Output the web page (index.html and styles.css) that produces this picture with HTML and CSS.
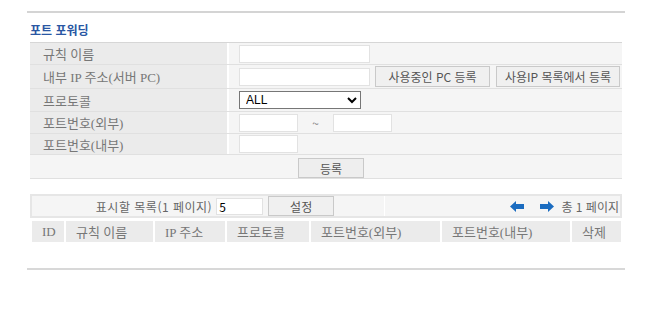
FILE: index.html
```html
<!DOCTYPE html>
<html lang="ko">
<head>
  <meta charset="UTF-8" />
  <title>포트 포워딩</title>
  <link rel="stylesheet" href="styles.css">
</head>
<body>
  <div class="page">
    <h2 class="title">포트 포워딩</h2>

    <div class="form">
      <div class="row r1">
        <div class="label">규칙 이름</div>
        <div class="value"><input type="text" class="field wide" /></div>
      </div>
      <div class="row r2">
        <div class="label">내부 IP 주소(서버 PC)</div>
        <div class="value">
          <input type="text" class="field wide" />
          <button class="btn pc">사용중인 PC 등록</button>
          <button class="btn iplist">사용IP 목록에서 등록</button>
        </div>
      </div>
      <div class="row r3">
        <div class="label">프로토콜</div>
        <div class="value">
          <select class="proto">
            <option>ALL</option>
            <option>TCP</option>
            <option>UDP</option>
          </select>
        </div>
      </div>
      <div class="row r4">
        <div class="label">포트번호(외부)</div>
        <div class="value">
          <input type="text" class="field short" />
          <span class="tilde">~</span>
          <input type="text" class="field short" />
        </div>
      </div>
      <div class="row r5">
        <div class="label">포트번호(내부)</div>
        <div class="value"><input type="text" class="field short" /></div>
      </div>
      <div class="row r6 submit-row">
        <button class="btn submit">등록</button>
      </div>
    </div>

    <div class="pager">
      <div class="pager-left">
        <span>표시할 목록(1 페이지)</span>
        <input type="text" class="field count" value="5" />
        <button class="btn setbtn">설정</button>
      </div>
      <div class="pager-right">
        <svg class="arrow" width="14" height="11" viewBox="0 0 14 11">
          <path d="M0 5.5 L6 0 L6 3 L14 3 L14 8 L6 8 L6 11 Z" fill="#1b6cc0"/>
        </svg>
        <svg class="arrow next" width="14" height="11" viewBox="0 0 14 11">
          <path d="M14 5.5 L8 0 L8 3 L0 3 L0 8 L8 8 L8 11 Z" fill="#1b6cc0"/>
        </svg>
        <span>총 1 페이지</span>
      </div>
    </div>

    <div class="head">
      <div>ID</div>
      <div>규칙 이름</div>
      <div>IP 주소</div>
      <div>프로토콜</div>
      <div>포트번호(외부)</div>
      <div>포트번호(내부)</div>
      <div>삭제</div>
    </div>

    <div class="bottom-line"></div>
  </div>
</body>
</html>
```

FILE: styles.css
```css
body {
  margin: 0;
  font-family: "Noto Sans CJK KR", "Noto Sans", sans-serif;
  font-size: 12px;
  color: #666;
  background: #fff;
}

.page {
  width: 598px;
  margin-left: 27px;
  padding-top: 11px;
}

.title {
  margin: 0;
  padding: 8px 3px 0;
  height: 21px;
  border-top: 2px solid #d4d4d4;
  font-size: 12px;
  font-weight: bold;
  color: #2a57a3;
  line-height: 18px;
}

.form {
  margin: 0 3px;
  border-top: 1px solid #d6d6d6;
}

.row {
  display: flex;
  border-bottom: 1px solid #e0e0e0;
}

.r1 { height: 21px; }
.r2 { height: 23px; }
.r3 { height: 22px; }
.r4 { height: 21px; }
.r5 { height: 20px; }
.r6 { height: 23px; }

.label {
  width: 184px;
  padding-left: 13px;
  background: #ebebeb;
  border-right: 2px solid #fff;
  display: flex;
  align-items: center;
  font-family: "Liberation Serif", "Noto Sans CJK KR", serif;
  font-size: 13px;
  color: #777;
}

.value {
  flex: 1;
  background: #f5f5f5;
  display: flex;
  align-items: center;
  padding-left: 10px;
}

.field {
  height: 18px;
  box-sizing: border-box;
  border: 1px solid #e2e2e2;
  background: #fff;
  padding: 0 2px;
  font-family: "Noto Sans CJK KR", sans-serif;
  font-size: 12px;
  outline: none;
}

.wide { width: 131px; }
.short { width: 59px; }

.btn {
  height: 21px;
  border: 1px solid #c9c9c9;
  background: #f0f0f0;
  color: #555;
  font-family: "Noto Sans CJK KR", sans-serif;
  font-size: 12px;
  padding: 0;
  cursor: pointer;
}

.pc { width: 115px; margin-left: 5px; }
.iplist { width: 124px; margin-left: 6px; }

.proto {
  width: 122px;
  height: 18px;
  border: 1px solid #767676;
  background: #fff;
  color: #000;
  font-family: "Liberation Sans", sans-serif;
  font-size: 12px;
  padding: 0 2px;
}

.tilde {
  width: 35px;
  text-align: center;
  color: #888;
}

.submit-row {
  background: #f5f5f5;
  justify-content: center;
  align-items: flex-end;
}

.submit {
  width: 66px;
  height: 20px;
  margin-left: 10px;
  background: #eeeeee;
}

.pager {
  margin: 15px 3px 0;
  height: 20px;
  border: 2px solid #e6e6e6;
  display: flex;
  background: #f5f5f5;
}

.pager-left {
  width: 353px;
  border-right: 1px solid #fff;
  display: flex;
  align-items: center;
  justify-content: center;
  padding-left: 14px;
  box-sizing: border-box;
}

.pager-left span {
  margin-right: 4px;
  font-size: 12px;
  letter-spacing: 0.5px;
}

.count {
  width: 47px;
  height: 17px;
  color: #000;
}

.setbtn {
  width: 66px;
  height: 20px;
  margin-left: 5px;
}

.pager-right {
  flex: 1;
  display: flex;
  align-items: center;
  justify-content: flex-end;
  padding-right: 1px;
}

.arrow { margin-right: 16px; }
.arrow.next { margin-right: 7px; }

.head {
  margin: 1px 3px 0;
  padding: 2px;
  display: grid;
  grid-template-columns: 32px 87px 70px 82px 129px 128px 49px;
  gap: 2px;
}

.head div {
  height: 21px;
  background: #ebebeb;
  padding-left: 10px;
  display: flex;
  align-items: center;
  font-family: "Liberation Serif", "Noto Sans CJK KR", serif;
  font-size: 13px;
  color: #777;
}

.bottom-line {
  margin-top: 24px;
  border-top: 2px solid #d8d8d8;
}
```
